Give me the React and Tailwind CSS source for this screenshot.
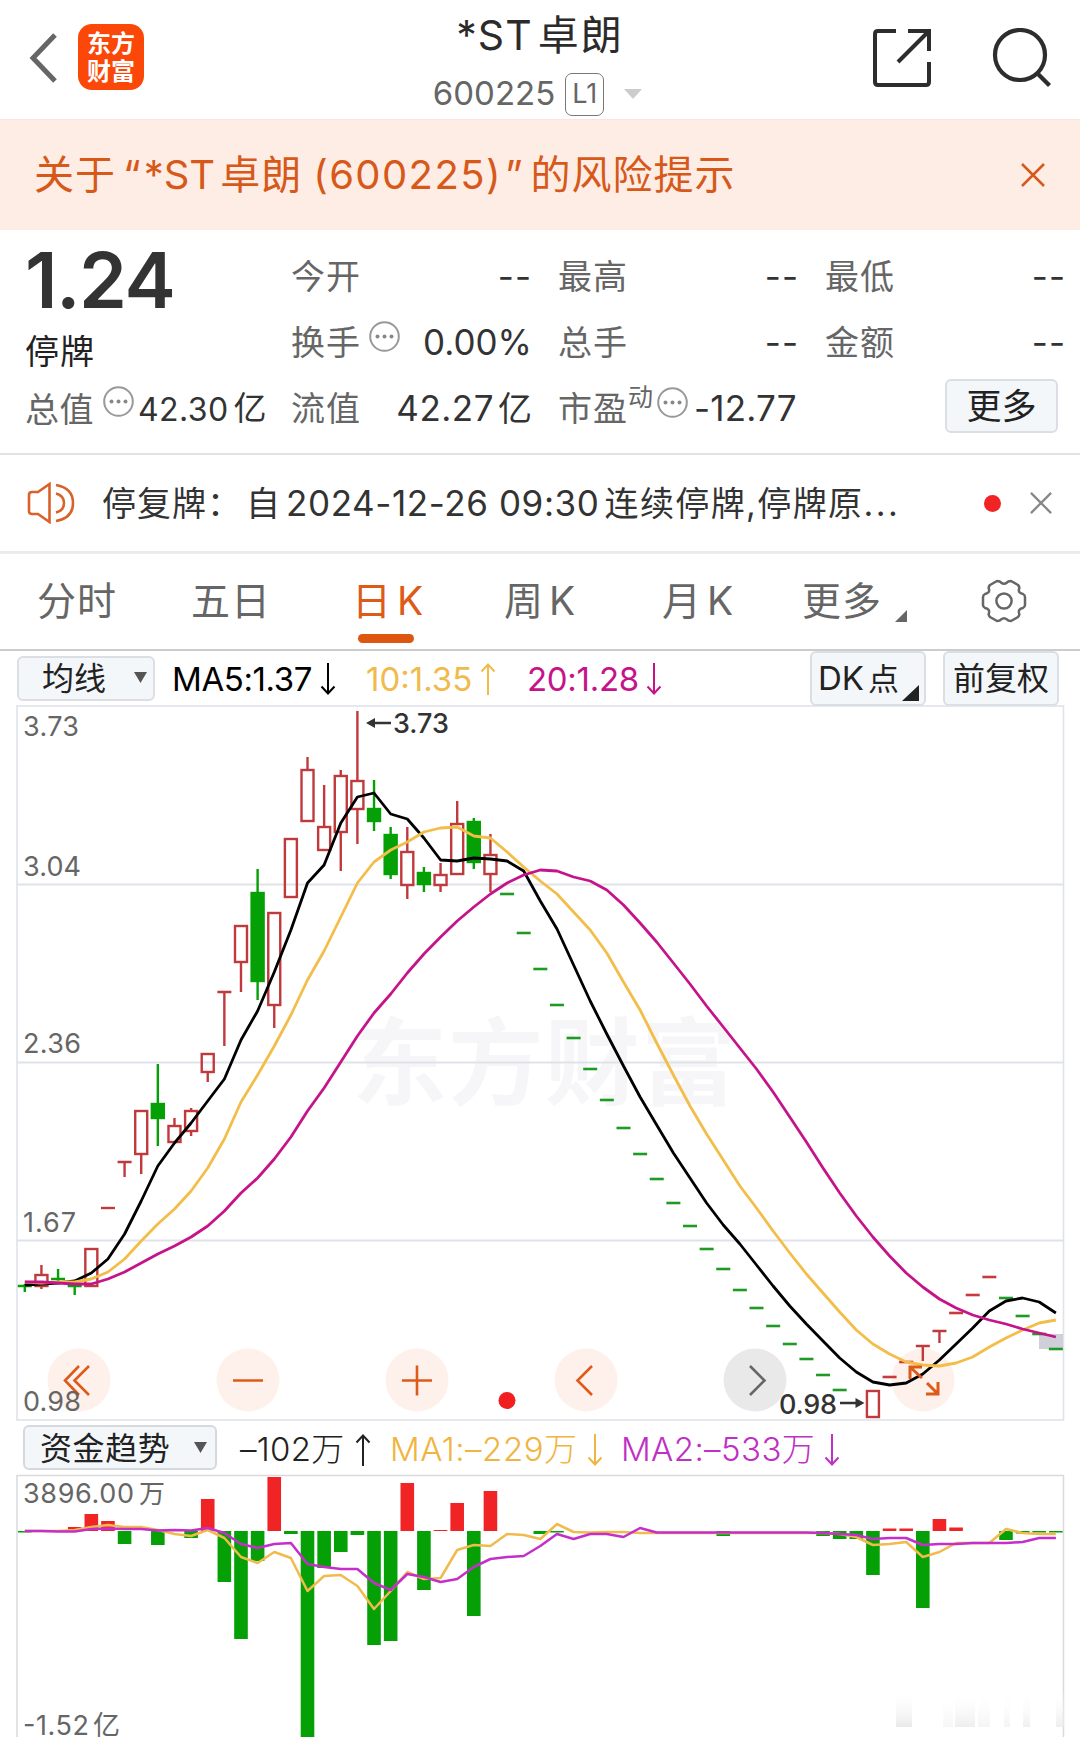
import clsx from 'clsx'

const STEP = 16.63
const X0 = 24.8
const px = i => X0 + i * STEP

// [index, colour, high, top, bottom, low]
const candles = [
  [0, 'g', 1284, 1286, 1286, 1292], [1, 'r', 1265, 1274, 1286, 1289], [2, 'g', 1269, 1279, 1279, 1282],
  [3, 'g', 1285, 1286, 1286, 1295], [4, 'r', 1248, 1248, 1286, 1287], [5, 'r', 1208, 1208, 1208, 1208],
  [6, 'r', 1162, 1162, 1162, 1177], [7, 'r', 1110, 1110, 1154, 1174], [8, 'g', 1064, 1103, 1118, 1146],
  [9, 'r', 1118, 1125, 1142, 1142], [10, 'r', 1108, 1110, 1131, 1136], [11, 'r', 1053, 1053, 1072, 1082],
  [12, 'r', 992, 992, 992, 1046], [13, 'r', 925, 925, 962, 992], [14, 'g', 869, 892, 981, 1000],
  [15, 'r', 912, 912, 1005, 1028], [16, 'r', 838, 838, 897, 897], [17, 'r', 757, 769, 821, 821],
  [18, 'r', 785, 826, 850, 850], [19, 'r', 770, 775, 832, 871], [20, 'r', 711, 780, 809, 844],
  [21, 'g', 780, 808, 821, 831], [22, 'g', 827, 834, 874, 879], [23, 'r', 827, 851, 885, 899],
  [24, 'g', 867, 872, 884, 892], [25, 'r', 863, 874, 885, 892], [26, 'r', 801, 823, 874, 874],
  [27, 'g', 818, 821, 862, 869], [28, 'r', 834, 854, 874, 892], [51, 'r', 1390, 1390, 1417, 1417],
  [54, 'r', 1346, 1346, 1346, 1361], [55, 'r', 1331, 1331, 1331, 1343],
]
// limit days, only a dash
const greenDash = [
  [29, 894], [30, 933], [31, 969], [32, 1005], [33, 1038], [34, 1069], [35, 1100], [36, 1128], [37, 1154],
  [38, 1179], [39, 1203], [40, 1226], [41, 1249], [42, 1269], [43, 1290], [44, 1308], [45, 1326], [46, 1344],
  [47, 1359], [48, 1375], [49, 1390], [59, 1298], [60, 1316], [61, 1334], [62, 1349],
]
const redDash = [[52, 1377], [53, 1362], [56, 1313], [57, 1295], [58, 1277]]

const ma5 = [1285, 1284, 1283, 1281, 1273, 1259, 1234, 1201, 1166, 1143, 1123, 1101, 1079, 1040, 1011, 972, 930, 883, 865, 823, 797, 793, 814, 819, 838, 860, 861, 858, 859, 861, 871, 901, 929, 965, 1001, 1034, 1066, 1097, 1125, 1153, 1178, 1203, 1225, 1244, 1265, 1286, 1306, 1324, 1341, 1358, 1372, 1382, 1385, 1383, 1374, 1360, 1344, 1328, 1311, 1301, 1298, 1302, 1313]
const ma10 = [1282, 1283, 1282, 1282, 1279, 1272, 1259, 1241, 1224, 1209, 1191, 1168, 1139, 1102, 1075, 1046, 1015, 980, 951, 917, 883, 862, 850, 842, 832, 828, 827, 836, 838, 852, 867, 881, 894, 912, 930, 953, 982, 1010, 1043, 1075, 1106, 1134, 1160, 1186, 1208, 1231, 1253, 1274, 1293, 1312, 1330, 1344, 1354, 1362, 1365, 1366, 1363, 1357, 1347, 1338, 1330, 1323, 1320]
const ma20 = [1282, 1282, 1283, 1284, 1284, 1279, 1272, 1263, 1254, 1246, 1237, 1226, 1211, 1193, 1178, 1159, 1137, 1111, 1088, 1062, 1036, 1013, 994, 973, 954, 937, 921, 907, 894, 883, 875, 870, 871, 877, 881, 890, 905, 923, 942, 963, 984, 1006, 1027, 1048, 1069, 1092, 1117, 1142, 1168, 1193, 1216, 1237, 1256, 1273, 1287, 1299, 1308, 1315, 1320, 1324, 1329, 1333, 1337]

const flowRed = [[3, 1527], [4, 1514], [5, 1521], [11, 1499], [15, 1477], [23, 1483], [25, 1530], [26, 1503], [28, 1491], [52, 1528.5], [53, 1528.5], [55, 1519], [56, 1527.5]]
const flowGreen = [[0, 1532.5], [6, 1544], [8, 1545], [10, 1538], [12, 1582], [13, 1639], [14, 1561], [16, 1534], [17, 1737], [18, 1568], [19, 1552], [20, 1535], [21, 1645], [22, 1641], [24, 1590], [27, 1616], [31, 1534], [32, 1532.5], [42, 1536], [48, 1536], [49, 1539], [50, 1539], [51, 1575], [54, 1608], [59, 1540], [60, 1533.5], [61, 1532.5], [62, 1532.5]]
const flowMa1 = [1531, 1531, 1531, 1530, 1527, 1525, 1527, 1527, 1530, 1534, 1536, 1530, 1538, 1557, 1563, 1552, 1558, 1591, 1576, 1575, 1586, 1609, 1591, 1572, 1579, 1578, 1550, 1545, 1546, 1534, 1535, 1539, 1524, 1532, 1532.5, 1532, 1532, 1533, 1533, 1533, 1533, 1533, 1533, 1533, 1533, 1533, 1533, 1533, 1533, 1534, 1537, 1545, 1544, 1542, 1557, 1552, 1543, 1543, 1543, 1529, 1533, 1534, 1534]
const flowMa2 = [1531, 1531, 1531.5, 1531.5, 1529, 1528.5, 1529, 1529, 1530.5, 1530, 1530.5, 1528, 1533, 1544, 1548, 1544, 1543, 1564, 1567, 1569, 1569, 1583, 1590, 1574, 1577, 1582, 1579, 1567, 1559, 1557, 1556, 1546, 1534, 1539, 1534, 1534, 1537, 1528, 1532.5, 1532.5, 1532.5, 1532.5, 1532.5, 1532.5, 1532.5, 1532.5, 1532.5, 1532.5, 1533, 1534, 1535, 1539, 1538, 1538, 1545, 1544, 1544, 1543, 1543, 1543, 1542, 1538, 1538]

const line = ys => ys.map((y, i) => `${px(i).toFixed(1)},${y}`).join(' ')

function Candle({ d }) {
  const [i, c, high, top, bottom, low] = d
  const x = px(i)
  const color = c === 'r' ? '#c03a3d' : '#05a005'
  if (top === bottom) {
    return <path d={`M${x - 7} ${top}H${x + 7}M${x} ${high}V${low}`} stroke={color} strokeWidth="2.4" fill="none" />
  }
  return (
    <g stroke={color} strokeWidth="2.4">
      <path d={`M${x} ${high}V${top}M${x} ${bottom}V${low}`} fill="none" />
      <rect x={x - 6} y={top + 1} width="12" height={bottom - top - 1} fill={c === 'r' ? 'none' : color} />
    </g>
  )
}

function Label({ x, y, w, children, size = 27, fill = '#666', weight = 400 }) {
  return <text x={x} y={y} textLength={w} fontSize={size} fill={fill} fontWeight={weight}>{children}</text>
}

function KChart() {
  return (
    <svg className="block" width="1080" height="716" viewBox="0 705 1080 716">
      <text x="352" y="1098" textLength="384" fontSize="95" fontWeight="700" fill="#f6f6f8">东方财富</text>
      <g stroke="#dfe3e9" strokeWidth="2" fill="none">
        <path d="M17 884.5H1063M17 1062.5H1063M17 1240.5H1063" />
        <rect x="17" y="706" width="1046.5" height="714" strokeWidth="1.6" />
      </g>
      <g fill="#fef0ea">
        {[79, 248, 417, 586, 923].map(x => <circle key={x} cx={x} cy="1380" r="31.5" />)}
        <circle cx="755" cy="1380" r="31.5" fill="#e9e9e9" />
      </g>
      <rect x="1039" y="1334" width="24" height="15" fill="#cfcfd9" />
      {candles.map(d => <Candle key={d[0]} d={d} />)}
      <g strokeWidth="2.6">
        {greenDash.map(([i, y]) => <path key={i} d={`M${px(i) - 7} ${y}h14`} stroke="#1f9a24" />)}
        {redDash.map(([i, y]) => <path key={i} d={`M${px(i) - 7} ${y}h14`} stroke="#c83a3f" />)}
      </g>
      <g fill="none" strokeWidth="2.8" strokeLinejoin="round">
        <polyline points={line(ma5)} stroke="#000" />
        <polyline points={line(ma10)} stroke="#f3bd49" />
        <polyline points={line(ma20)} stroke="#c5148a" />
      </g>
      <g fill="none" stroke="#dd5a18" strokeWidth="2.6">
        <path d="M79 1366L65 1380.5L79 1395M89 1366L74.5 1380.5L89 1395" />
        <path d="M233 1380.5H263M402 1380.5H432M417 1365.5V1395.5" />
        <path d="M592 1366L577.5 1380.5L592 1395" />
        <path d="M750 1366L764.5 1380.5L750 1395" stroke="#666" />
        <path d="M922 1367H910V1379M910 1367L922 1378M938 1382V1394H926M938 1394L927 1383" strokeWidth="3" />
      </g>
      <circle cx="507" cy="1400.5" r="8.5" fill="#f02020" />
      <Label x="23" y="736" w="56">3.73</Label>
      <Label x="23" y="875.5" w="58">3.04</Label>
      <Label x="23" y="1053" w="58">2.36</Label>
      <Label x="23" y="1232" w="53">1.67</Label>
      <Label x="23" y="1410.5" w="58">0.98</Label>
      <Label x="393" y="733" w="56" fill="#333" weight={500}>3.73</Label>
      <Label x="779" y="1413.5" w="58" fill="#333" weight={500}>0.98</Label>
      <path d="M391 723H372M840 1403H858" stroke="#333" strokeWidth="2.5" />
      <path d="M366 723l9-5v10zM864.5 1403l-9-5v10z" fill="#333" />
    </svg>
  )
}

function FlowChart() {
  return (
    <svg className="block" width="1080" height="263" viewBox="0 1474 1080 263">
      <defs>
        <linearGradient id="fade" x1="0" y1="0" x2="0" y2="1">
          <stop offset="0" stopColor="#fff" stopOpacity="0" />
          <stop offset="1" stopColor="#e9e9e9" />
        </linearGradient>
      </defs>
      <path d="M17 1740V1475.5H1063.5V1740" fill="none" stroke="#d9dadd" strokeWidth="1.5" />
      {flowRed.map(([i, y]) => <rect key={i} x={px(i) - 6.8} y={y} width="13.6" height={1531 - y} fill="#f02325" />)}
      {flowGreen.map(([i, y]) => <rect key={i} x={px(i) - 6.8} y="1531" width="13.6" height={y - 1531} fill="#05a005" />)}
      <g fill="none" strokeWidth="2.5" strokeLinejoin="round">
        <polyline points={line(flowMa1)} stroke="#f0bb4c" />
        <polyline points={line(flowMa2)} stroke="#c42fc9" />
      </g>
      <g fill="url(#fade)">
        <rect x="896" y="1690" width="16" height="37" />
        <rect x="943" y="1690" width="10" height="37" opacity=".4" />
        <rect x="955" y="1690" width="20" height="37" opacity=".8" />
        <rect x="978" y="1690" width="12" height="37" opacity=".5" />
        <rect x="1004" y="1690" width="6" height="37" opacity=".5" />
        <rect x="1023" y="1690" width="7" height="37" opacity=".7" />
        <rect x="1056" y="1690" width="8" height="37" opacity=".8" />
      </g>
      <Label x="23" y="1503" w="111">3896.00</Label>
      <text x="139" y="1503" fontSize="26" fill="#666">万</text>
      <Label x="23" y="1735" w="66">-1.52</Label>
      <text x="93" y="1735" fontSize="27" fill="#666">亿</text>
    </svg>
  )
}

function Dots({ className }) {
  return (
    <svg className={clsx('shrink-0', className)} width="31" height="31" viewBox="0 0 31 31">
      <circle cx="15.5" cy="15.5" r="14.3" fill="none" stroke="#999" strokeWidth="2" />
      <g fill="#888"><circle cx="8.5" cy="15.5" r="2" /><circle cx="15.5" cy="15.5" r="2" /><circle cx="22.5" cy="15.5" r="2" /></g>
    </svg>
  )
}

function Close({ className, size = 24 }) {
  return (
    <svg className={className} width={size} height={size} viewBox="0 0 24 24" fill="none" stroke="currentColor" strokeWidth="2.5">
      <path d="M1 1l22 22M23 1L1 23" />
    </svg>
  )
}

function Arrow({ up, className }) {
  return (
    <svg className={clsx('shrink-0', up && 'rotate-180', className)} width="16" height="32" viewBox="0 0 16 32" fill="none" stroke="currentColor" strokeWidth="2">
      <path d="M8 0v30M1.500 23.500L8 30.500l6.500-7" />
    </svg>
  )
}

function Caret({ className }) {
  return <svg className={className} width="13" height="11" viewBox="0 0 13 11"><path d="M0 0h13L6.500 11z" fill="#555" /></svg>
}

function Cell({ label, children }) {
  return (
    <div className="flex h-[66px] items-center justify-between">
      <span className="tracking-[1px] text-[#666]">{label}</span>
      <span className="flex items-center pt-px text-[35px]">{children}</span>
    </div>
  )
}

const Dash = () => <span className="tracking-[1px]">--</span>

export default function App() {
  return (
    <div className="h-[1737px] w-[1080px] overflow-hidden bg-white font-['Inter','Noto_Sans_CJK_SC',sans-serif] whitespace-nowrap text-[#333]">
      <header className="flex h-[119px] items-start justify-between pr-[28px] pl-[28px]">
        <div className="flex w-[400px] pt-6">
          <svg className="mt-2" width="30" height="52" viewBox="0 0 30 52" fill="none" stroke="#666" strokeWidth="5">
            <path d="M27 3L5 26l22 23" />
          </svg>
          <div className="ml-5 flex h-[66px] w-[66px] flex-col items-center justify-center rounded-[14px] bg-[#fb4708] pt-0.5 text-[24px] leading-[28px] font-bold text-white">
            <span>东方</span>
            <span>财富</span>
          </div>
        </div>
        <div className="flex flex-col items-center">
          <div className="mt-[10px] flex h-[52px] items-center text-[41px] text-[#2b2b2b]">
            <span className="tracking-[1px]">*ST</span>
            <span className="ml-[5px] tracking-[2px]">卓朗</span>
          </div>
          <div className="mt-[10px] mr-[5px] flex h-[44px] items-center text-[#666]">
            <span className="text-[33px]">600225</span>
            <span className="ml-[10px] flex h-[43px] w-[39px] items-center justify-center rounded-[7px] border-[1.500px] border-[#777] text-[27px]">L1</span>
            <svg className="ml-5" width="18" height="10" viewBox="0 0 18 10"><path d="M0 0h18L9 10z" fill="#ccc" /></svg>
          </div>
        </div>
        <div className="flex w-[400px] justify-end pt-7">
          <svg className="mr-[60px]" width="60" height="60" viewBox="0 0 60 60" fill="none" stroke="#2d2d2d" strokeWidth="4">
            <path d="M24 3H6Q3 3 3 6V54Q3 57 6 57H54Q57 57 57 54V34M36 3H57V23M57 3L26 34" />
          </svg>
          <svg width="60" height="60" viewBox="0 0 60 60" fill="none" stroke="#2d2d2d" strokeWidth="4.200">
            <circle cx="28" cy="27" r="25" />
            <path d="M45 45l12.500 12.500" />
          </svg>
        </div>
      </header>

      <div className="flex h-[111px] items-center justify-between border-t border-[#f5e6e4] bg-[#fdede5] pr-[35px] pl-[34px] text-[40px] text-[#d7591a]">
        <div className="flex items-center">
          <span className="tracking-[1px]">关于</span>
          <span className="ml-[7px]">“</span>
          <span className="ml-[3px]">*ST</span>
          <span className="ml-[5px] tracking-[1px]">卓朗</span>
          <span className="ml-[11px] tracking-[1.4px]">(600225)</span>
          <span className="ml-[3px]">”</span>
          <span className="ml-2 tracking-[1px]">的风险提示</span>
        </div>
        <Close />
      </div>

      <section className="grid h-[225px] grid-cols-[240px_241px_241px_241px] gap-x-[26px] border-b-2 border-[#e2e2e2] pt-[13px] pl-[25px] text-[34px]">
        <div>
          <div className="h-[77px] text-[77px] leading-[74px] font-semibold tracking-[-1.500px]">1.24</div>
          <div className="mt-1 flex h-[54px] items-center tracking-[1px] text-[#222]">停牌</div>
          <div className="mt-[3px] flex h-[56px] items-center">
            <span className="tracking-[0.5px] text-[#666]">总值</span>
            <Dots className="mb-4 ml-[9px]" />
            <span className="ml-1 pt-0.5 text-[32px] tracking-[0.4px]">42.30</span>
            <span className="ml-[5px] text-[33px]">亿</span>
          </div>
        </div>
        <div>
          <Cell label="今开"><Dash /></Cell>
          <div className="flex h-[66px] items-center">
            <span className="tracking-[1px] text-[#666]">换手</span>
            <Dots className="mb-3 ml-2" />
            <span className="ml-auto pt-px text-[35px]">0.00%</span>
          </div>
          <Cell label="流值"><span className="tracking-[0.5px]">42.27</span><span className="ml-1 text-[34px]">亿</span></Cell>
        </div>
        <div>
          <Cell label="最高"><Dash /></Cell>
          <Cell label="总手"><Dash /></Cell>
          <div className="flex h-[66px] items-center">
            <span className="tracking-[1px] text-[#666]">市盈</span>
            <span className="mb-5 text-[25px] text-[#666]">动</span>
            <Dots className="mb-3 ml-1" />
            <span className="ml-[6px] pt-px text-[35px] tracking-[0.2px]">-12.77</span>
          </div>
        </div>
        <div>
          <Cell label="最低"><Dash /></Cell>
          <Cell label="金额"><Dash /></Cell>
          <div className="mt-1 ml-[120px] flex h-[54px] w-[113px] items-center justify-center rounded-md border-2 border-[#dcdee6] bg-[#f4f7fa] text-[35px] text-[#222]">更多</div>
        </div>
      </section>

      <div className="flex h-[99px] items-center border-b-[3px] border-[#ebebeb] pl-[27px] text-[34px]">
        <svg width="48" height="42" viewBox="0 0 48 42" fill="none" stroke="#d9612a" strokeWidth="2.600">
          <path d="M22.500 2v38L11 32H5q-3 0-3-3V13q0-3 3-3h6zM29 3q17 3 17 18T29 39M29 11.500q8 2 8 9.500t-8 9.500" />
        </svg>
        <span className="ml-[27px] tracking-[1px]">停复牌：</span>
        <span className="ml-1">自</span>
        <span className="ml-[6px] text-[35px] tracking-[0.6px]">2024-12-26 09:30</span>
        <span className="ml-[5px] tracking-[1.4px]">连续停牌,停牌原</span>
        <span className="tracking-[2.500px]">...</span>
        <span className="ml-auto h-[17px] w-[17px] rounded-full bg-[#f02325]" />
        <Close className="mr-[28px] ml-[29px] text-[#888]" size={22} />
      </div>

      <nav className="flex h-[97px] items-center border-b-2 border-[#ccc] pl-[37px] text-[39px] text-[#666]">
        <span className="w-[154px] tracking-[1px]">分时</span>
        <span className="w-[161px] tracking-[1px]">五日</span>
        <span className="relative w-[152px] text-[#dd5a18]">
          日<span className="ml-[6px]">K</span>
          <i className="absolute -bottom-[12px] left-[6px] h-[9px] w-[56px] rounded-full bg-[#dd5710]" />
        </span>
        <span className="w-[158px]">周<span className="ml-[6px]">K</span></span>
        <span className="w-[140px]">月<span className="ml-[6px]">K</span></span>
        <span className="tracking-[1px]">更多</span>
        <svg className="mt-7 ml-[13px]" width="12" height="12" viewBox="0 0 12 12"><path d="M12 0v12H0z" fill="#666" /></svg>
        <svg className="mb-px ml-[74px]" width="46" height="46" viewBox="-23 -23 46 46" fill="none" stroke="#666" strokeWidth="2.500" strokeLinejoin="round">
          <circle r="7.600" />
          <path d="M-7-20Q-4-20-3-18.500Q0-16 3-18.500Q4-20 7-20L14-16Q16-14 15-12Q14-8 19-7Q21-6 21-4V4Q21 6 19 7Q14 8 15 12Q16 14 14 16L7 20Q4 20 3 18.500Q0 16-3 18.500Q-4 20-7 20L-14 16Q-16 14-15 12Q-14 8-19 7Q-21 6-21 4V-4Q-21-6-19-7Q-14-8-15-12Q-16-14-14-16Z" />
        </svg>
      </nav>

      <div className="flex h-[54px] items-center pl-[17px] text-[33px] text-black">
        <div className="flex h-[45px] w-[138px] items-center rounded-md border-2 border-[#dcdee6] bg-[#f4f7fa] pt-0.5 pl-[23px] text-[32px] text-[#222]">
          均线
          <Caret className="mb-1 ml-7" />
        </div>
        <span className="ml-[17px] w-[148px] pt-[3px] tracking-[-0.4px]">MA5:1.37</span>
        <Arrow className="mt-0.5" />
        <span className="ml-[30px] w-[114px] pt-[3px] text-[#f0bb4c]">10:1.35</span>
        <Arrow up className="mt-0.5 text-[#f0bb4c]" />
        <span className="ml-[31px] w-[119px] pt-[3px] tracking-[-0.3px] text-[#c5148a]">20:1.28</span>
        <Arrow className="mt-0.5 text-[#c5148a]" />
        <div className="relative ml-auto flex h-[55px] w-[116px] items-center rounded-md border-2 border-[#dcdee6] bg-[#f4f7fa] pt-0.5 pl-[6px] text-[#222]">
          DK<span className="ml-1 text-[31px]">点</span>
          <svg className="absolute right-[5px] bottom-[3px]" width="17" height="16" viewBox="0 0 17 16"><path d="M17 0v16H0z" fill="#222" /></svg>
        </div>
        <div className="mr-[21px] ml-[17px] flex h-[55px] w-[116px] items-center justify-center rounded-md border-2 border-[#dcdee6] bg-[#f4f7fa] pt-0.5 text-[32px] text-[#222]">前复权</div>
      </div>

      <KChart />

      <div className="flex h-[53px] items-center pl-[23px] text-[33px] font-light text-[#222]">
        <div className="flex h-[45px] w-[194px] items-center rounded-md border-2 border-[#d5d9de] bg-[#f4f7fa] pt-[3px] pl-[15px] text-[32px] font-normal tracking-[0.6px]">
          资金趋势
          <Caret className="mb-1 ml-6" />
        </div>
        <span className="ml-[23px] w-[115px] pt-1 tracking-[0.3px]">–102万</span>
        <Arrow up className="mt-1" />
        <span className="ml-[19px] w-[197px] pt-1 tracking-[0.5px] text-[#f0b440]">MA1:–229万</span>
        <Arrow className="mt-1 text-[#f0b440]" />
        <span className="ml-[18px] w-[203px] pt-1 tracking-[0.4px] text-[#bf30c4]">MA2:–533万</span>
        <Arrow className="mt-1 text-[#bf30c4]" />
      </div>

      <FlowChart />
    </div>
  )
}
